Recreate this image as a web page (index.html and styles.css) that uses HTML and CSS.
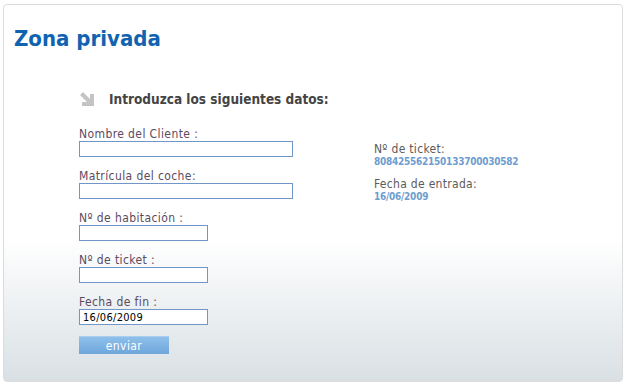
FILE: index.html
```html
<!DOCTYPE html>
<html lang="es">
<head>
    <meta charset="UTF-8">
    <title>Zona privada</title>
    <link rel="stylesheet" href="styles.css">
</head>
<body>
    <div class="panel">
        <h1 class="title">Zona privada</h1>
        <div class="content">
            <h2 class="subtitle">
                <svg class="arrow" width="16" height="16" viewBox="0 0 16 16">
                    <path d="M1 4 L4 1 L11 8 L11 3 L15 3 L15 15 L3 15 L3 11 L8 11 Z" fill="#c4c4c4"/>
                </svg>
                Introduzca los siguientes datos:
            </h2>
            <div class="columns">
                <form class="fields">
                    <label class="field">
                        <span>Nombre del Cliente :</span>
                        <input type="text" class="wide">
                    </label>
                    <label class="field">
                        <span>Matrícula del coche:</span>
                        <input type="text" class="wide">
                    </label>
                    <label class="field">
                        <span>Nº de habitación :</span>
                        <input type="text" class="short">
                    </label>
                    <label class="field">
                        <span>Nº de ticket :</span>
                        <input type="text" class="short">
                    </label>
                    <label class="field">
                        <span>Fecha de fin :</span>
                        <input type="text" class="short" value="16/06/2009">
                    </label>
                    <button type="button" class="send">enviar</button>
                </form>
                <div class="info">
                    <div class="info-item">
                        <span class="info-label">Nº de ticket:</span>
                        <span class="info-value">808425562150133700030582</span>
                    </div>
                    <div class="info-item">
                        <span class="info-label">Fecha de entrada:</span>
                        <span class="info-value">16/06/2009</span>
                    </div>
                </div>
            </div>
        </div>
    </div>
</body>
</html>
```

FILE: styles.css
```css
body {
    margin: 0;
    font-family: "DejaVu Sans Condensed", "DejaVu Sans", sans-serif;
    background-color: #fff;
}

.panel {
    box-sizing: border-box;
    margin: 4px 0 0 3px;
    width: 620px;
    height: 378px;
    border: 1px solid #dcdcdc;
    border-radius: 4px;
    background: linear-gradient(to bottom, #fff 0, #fff 62%, #d9e0e4 100%);
}

.title {
    margin: 0;
    padding: 19px 0 0 10px;
    font-size: 22px;
    line-height: 30px;
    color: #1063b1;
}

.content {
    padding: 36px 0 0 75px;
}

.subtitle {
    display: flex;
    align-items: center;
    gap: 14px;
    margin: 0;
    font-size: 13.5px;
    line-height: 18px;
    color: #444;
}

.arrow {
    display: block;
}

.columns {
    display: flex;
    margin-top: 20px;
}

.fields {
    display: flex;
    flex-direction: column;
    width: 295px;
}

.field {
    display: flex;
    flex-direction: column;
    align-items: flex-start;
    height: 42px;
    font-size: 12px;
    line-height: 13px;
    letter-spacing: 0.4px;
    color: #5b4b5e;
}

.field input {
    box-sizing: border-box;
    height: 16px;
    margin: 0;
    padding: 0 3px;
    border: 1px solid #7196c8;
    font-family: inherit;
    font-size: 11px;
    letter-spacing: 0.3px;
    color: #000;
    background: #fff;
}

.wide {
    width: 214px;
}

.short {
    width: 129px;
}

.send {
    width: 90px;
    height: 18px;
    margin-top: -2px;
    padding: 0;
    border: 0;
    border-top: 1px solid #a9cdee;
    background: linear-gradient(to bottom, #8ec0ea, #6ea6db);
    color: #fff;
    font-family: inherit;
    font-size: 12px;
    line-height: 16px;
    letter-spacing: 0.4px;
}

.info {
    display: flex;
    flex-direction: column;
    gap: 10px;
    padding-top: 15px;
}

.info-item {
    display: flex;
    flex-direction: column;
}

.info-label {
    font-size: 12px;
    line-height: 13px;
    letter-spacing: 0.3px;
    color: #5b5b5b;
}

.info-value {
    font-size: 10px;
    line-height: 12px;
    font-weight: bold;
    letter-spacing: -0.25px;
    color: #6e9dd0;
}
```
